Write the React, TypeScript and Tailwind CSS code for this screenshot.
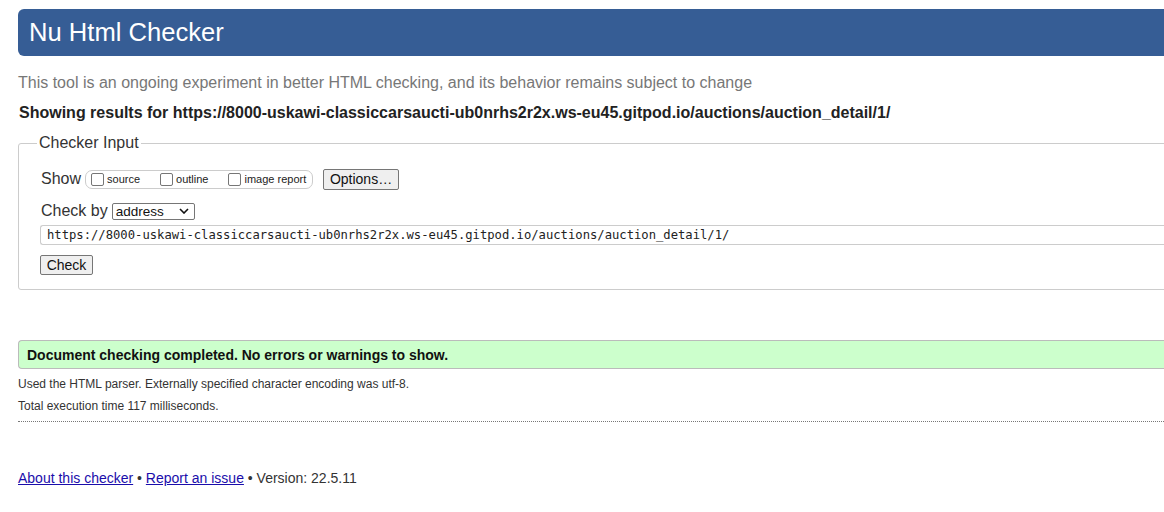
import React from 'react';

const sans = { fontFamily: '"Liberation Sans", Arial, sans-serif' };

const CheckOption = ({ label }: { label: string }) => (
  <label className="flex items-center gap-[2px] text-[11px] leading-[13px] text-[#222]">
    <span className="w-[13px] h-[13px] rounded-[2px] border border-[#767676] bg-white" />
    <span className="ml-[1px]">{label}</span>
  </label>
);

export default function App() {
  const url = 'https://8000-uskawi-classiccarsaucti-ub0nrhs2r2x.ws-eu45.gitpod.io/auctions/auction_detail/1/';

  return (
    <div className="w-[1164px] h-[512px] overflow-hidden bg-white" style={sans}>
      <div className="ml-[18px] w-[1180px] text-[#222]">
        {/* Header */}
        <div className="mt-[9px] h-[47px] rounded-l-[6px] bg-[#365d95] pl-[11px] flex items-center">
          <h1 className="text-white text-[25.6px] leading-none">Nu Html Checker</h1>
        </div>

        <p className="mt-[18px] text-[16px] leading-[18px] text-[#777]">
          This tool is an ongoing experiment in better HTML checking, and its behavior remains subject to change
        </p>
        <p className="mt-[12px] ml-[1px] text-[16px] leading-[18px] font-bold text-[#222]">
          Showing results for {url}
        </p>

        {/* Checker input */}
        <fieldset className="mt-[12px] border border-[#ccc] rounded-l-[3px] pl-[18px] pb-[14px]">
          <legend className="px-[2px] text-[16px] leading-[18px] text-[#333]">Checker Input</legend>

          <div className="mt-[16px] ml-[4px] flex items-center h-[22px]">
            <span className="text-[16px] leading-[18px] text-[#333]">Show</span>
            <div className="ml-[4px] h-[19px] w-[228px] rounded-[7px] border border-[#ccc] flex items-center pl-[5px]">
              <CheckOption label="source" />
              <div className="ml-[20px]"><CheckOption label="outline" /></div>
              <div className="ml-[20px]"><CheckOption label="image report" /></div>
            </div>
            <button className="ml-[10px] h-[21px] w-[76px] rounded-[2px] border border-[#767676] bg-[#efefef] text-[14px] leading-[16px] text-[#111]">
              Options…
            </button>
          </div>

          <div className="mt-[11px] ml-[4px] flex items-center h-[20px]">
            <span className="text-[16px] leading-[18px] text-[#333]">Check by</span>
            <div className="ml-[4px] h-[17px] w-[83px] rounded-[2px] border border-[#767676] bg-white flex items-center pl-[3px] pr-[5px] justify-between">
              <span className="text-[13.5px] leading-[15px] text-[#111]">address</span>
              <svg width="10" height="6" viewBox="0 0 10 6">
                <path d="M1 1l4 4 4-4" fill="none" stroke="#111" strokeWidth="1.6" />
              </svg>
            </div>
          </div>

          <div className="mt-[4px] ml-[3px] h-[20px] rounded-l-[3px] border border-[#ccc] border-r-0 flex items-center pl-[6px]">
            <span
              className="text-[12.2px] leading-[14px] text-[#222]"
              style={{ fontFamily: '"DejaVu Sans Mono", "Liberation Mono", monospace' }}
            >
              {url}
            </span>
          </div>

          <button className="mt-[10px] ml-[3px] h-[20px] w-[53px] rounded-[2px] border border-[#767676] bg-[#efefef] text-[14px] leading-[16px] text-[#111] block">
            Check
          </button>
        </fieldset>

        {/* Result */}
        <div className="mt-[50px] h-[29px] rounded-l-[4px] border border-r-0 border-[#bbb] bg-[#ccffcc] flex items-center pl-[8px]">
          <span className="text-[14px] leading-[16px] font-bold text-[#111]">
            Document checking completed. No errors or warnings to show.
          </span>
        </div>

        <p className="mt-[8px] text-[12px] leading-[14px] text-[#333]">
          Used the HTML parser. Externally specified character encoding was utf-8.
        </p>
        <p className="mt-[8px] text-[12px] leading-[14px] text-[#333]">Total execution time 117 milliseconds.</p>
        <div className="mt-[8px] border-b border-dotted border-[#777]" />

        {/* Footer */}
        <p className="mt-[48px] text-[14px] leading-[16px] text-[#333]">
          <a href="#" className="text-[#1a0dab] underline">About this checker</a>
          {' • '}
          <a href="#" className="text-[#1a0dab] underline">Report an issue</a>
          {' • Version: 22.5.11'}
        </p>
      </div>
    </div>
  );
}
